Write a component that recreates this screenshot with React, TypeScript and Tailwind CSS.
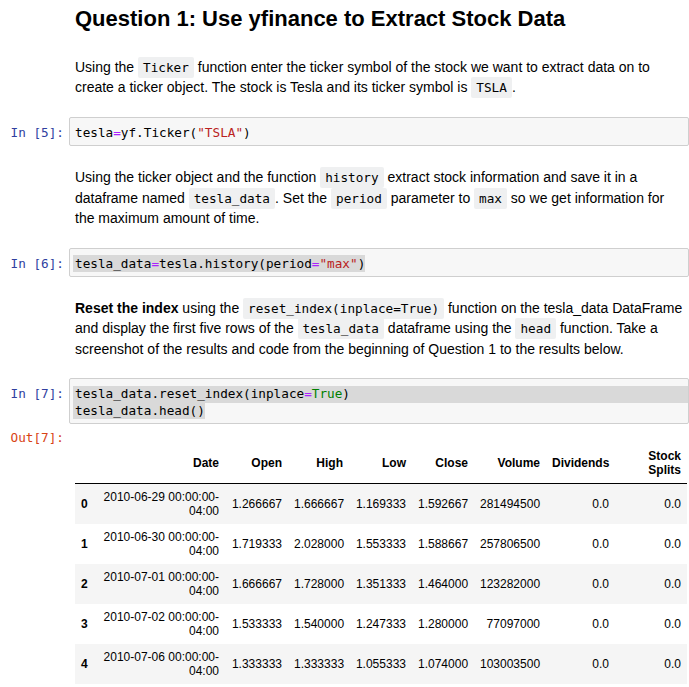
import type { ReactNode } from 'react'

const mono = "font-['DejaVu_Sans_Mono',monospace]"

type Row = { i: number; date: string; open: string; high: string; low: string; close: string; volume: string }

const ROWS: Row[] = [
  { i: 0, date: '2010-06-29', open: '1.266667', high: '1.666667', low: '1.169333', close: '1.592667', volume: '281494500' },
  { i: 1, date: '2010-06-30', open: '1.719333', high: '2.028000', low: '1.553333', close: '1.588667', volume: '257806500' },
  { i: 2, date: '2010-07-01', open: '1.666667', high: '1.728000', low: '1.351333', close: '1.464000', volume: '123282000' },
  { i: 3, date: '2010-07-02', open: '1.533333', high: '1.540000', low: '1.247333', close: '1.280000', volume: '77097000' },
  { i: 4, date: '2010-07-06', open: '1.333333', high: '1.333333', low: '1.055333', close: '1.074000', volume: '103003500' },
]

function Code({ children }: { children: ReactNode }) {
  return (
    <code className={`${mono} text-[12.7px] leading-none bg-[#eff0f1] px-[5px] py-[3px] rounded-[2px] text-black`}>
      {children}
    </code>
  )
}

function Op({ children }: { children: ReactNode }) {
  return <span className="text-[#aa22ff]">{children}</span>
}

function Str({ children }: { children: ReactNode }) {
  return <span className="text-[#ba2121]">{children}</span>
}

function CodeCell({ n, children }: { n: number; children: ReactNode }) {
  return (
    <div className="flex">
      <div className={`${mono} w-[69px] shrink-0 pr-[5px] pt-[8px] text-right text-[12.7px] leading-[16.5px] text-[#303f9f] whitespace-pre`}>
        In [{n}]:
      </div>
      <div className={`${mono} flex-1 bg-[#f7f7f7] border border-[#cfcfcf] rounded-[2px] pt-[7px] pb-[4px] pl-[5px] text-[12.7px] leading-[16.5px] text-black whitespace-pre`}>
        {children}
      </div>
    </div>
  )
}

function Md({ children, className = '' }: { children: ReactNode; className?: string }) {
  return (
    <div className={`pl-[75px] text-[14px] leading-[20.4px] text-black whitespace-nowrap ${className}`}>
      {children}
    </div>
  )
}

export default function App() {
  return (
    <div className="w-[689px] h-[687px] overflow-hidden bg-white font-['Liberation_Sans',Arial,sans-serif]">
      <h2 className="pt-[6px] pl-[75px] text-[22px] leading-[26px] font-bold text-black whitespace-nowrap">
        Question 1: Use yfinance to Extract Stock Data
      </h2>

      <Md className="mt-[25px]">
        Using the <Code>Ticker</Code> function enter the ticker symbol of the stock we want to extract data on to
        <br />
        create a ticker object. The stock is Tesla and its ticker symbol is <Code>TSLA</Code>.
      </Md>

      <div className="mt-[19px]">
        <CodeCell n={5}>
          <div>
            tesla<Op>=</Op>yf.Ticker(<Str>"TSLA"</Str>)
          </div>
        </CodeCell>
      </div>

      <Md className="mt-[21px]">
        Using the ticker object and the function <Code>history</Code> extract stock information and save it in a
        <br />
        dataframe named <Code>tesla_data</Code>. Set the <Code>period</Code> parameter to <Code>max</Code> so we get
        information for
        <br />
        the maximum amount of time.
      </Md>

      <div className="mt-[19px]">
        <CodeCell n={6}>
          <div>
            <span className="bg-[#d9d9d9] -ml-[2px] pl-[2px] py-[1px]">
              tesla_data<Op>=</Op>tesla.history(period<Op>=</Op><Str>"max"</Str>)
            </span>
          </div>
        </CodeCell>
      </div>

      <Md className="mt-[21px]">
        <b>Reset the index</b> using the <Code>reset_index(inplace=True)</Code> function on the tesla_data DataFrame
        <br />
        and display the first five rows of the <Code>tesla_data</Code> dataframe using the <Code>head</Code> function. Take a
        <br />
        screenshot of the results and code from the beginning of Question 1 to the results below.
      </Md>

      <div className="mt-[19px]">
        <CodeCell n={7}>
          <div className="bg-[#d9d9d9] -ml-[2px] pl-[2px]">
            tesla_data.reset_index(inplace<Op>=</Op><span className="text-[#008000]">True</span>)
          </div>
          <div>
            <span className="bg-[#d9d9d9] -ml-[2px] pl-[2px] inline-block">tesla_data.head()</span>
          </div>
        </CodeCell>
      </div>

      <div className="mt-[6px] flex">
        <div className={`${mono} w-[69px] shrink-0 pr-[5px] text-right text-[12.7px] leading-[16.5px] text-[#d84315] whitespace-pre`}>
          Out[7]:
        </div>
        <div className="pl-[6px] pt-[12.6px]">
          <table className="table-fixed border-separate border-spacing-0 w-[612px] text-[12px] leading-[14px] text-black">
            <colgroup>
              <col className="w-[18px]" />
              <col className="w-[132px]" />
              <col className="w-[63px]" />
              <col className="w-[61px]" />
              <col className="w-[63px]" />
              <col className="w-[62px]" />
              <col className="w-[72px]" />
              <col className="w-[69px]" />
              <col className="w-[72px]" />
            </colgroup>
            <thead>
              <tr>
                {['', 'Date', 'Open', 'High', 'Low', 'Close', 'Volume', 'Dividends'].map((h) => (
                  <th key={h} className="border-b border-black px-[6px] py-[6px] text-right align-middle font-bold whitespace-nowrap">
                    {h}
                  </th>
                ))}
                <th className="border-b border-black px-[6px] py-[6px] text-right align-middle font-bold">
                  Stock
                  <br />
                  Splits
                </th>
              </tr>
            </thead>
            <tbody>
              {ROWS.map((r) => (
                <tr key={r.i} className={r.i % 2 === 0 ? 'bg-[#f5f5f5]' : 'bg-white'}>
                  <th className="px-[6px] py-[6px] text-right align-middle font-bold">{r.i}</th>
                  <td className="px-[6px] py-[6px] text-right align-middle whitespace-nowrap">
                    {r.date} 00:00:00-
                    <br />
                    04:00
                  </td>
                  <td className="px-[6px] py-[6px] text-right align-middle">{r.open}</td>
                  <td className="px-[6px] py-[6px] text-right align-middle">{r.high}</td>
                  <td className="px-[6px] py-[6px] text-right align-middle">{r.low}</td>
                  <td className="px-[6px] py-[6px] text-right align-middle">{r.close}</td>
                  <td className="px-[6px] py-[6px] text-right align-middle">{r.volume}</td>
                  <td className="px-[6px] py-[6px] text-right align-middle">0.0</td>
                  <td className="px-[6px] py-[6px] text-right align-middle">0.0</td>
                </tr>
              ))}
            </tbody>
          </table>
        </div>
      </div>
    </div>
  )
}
